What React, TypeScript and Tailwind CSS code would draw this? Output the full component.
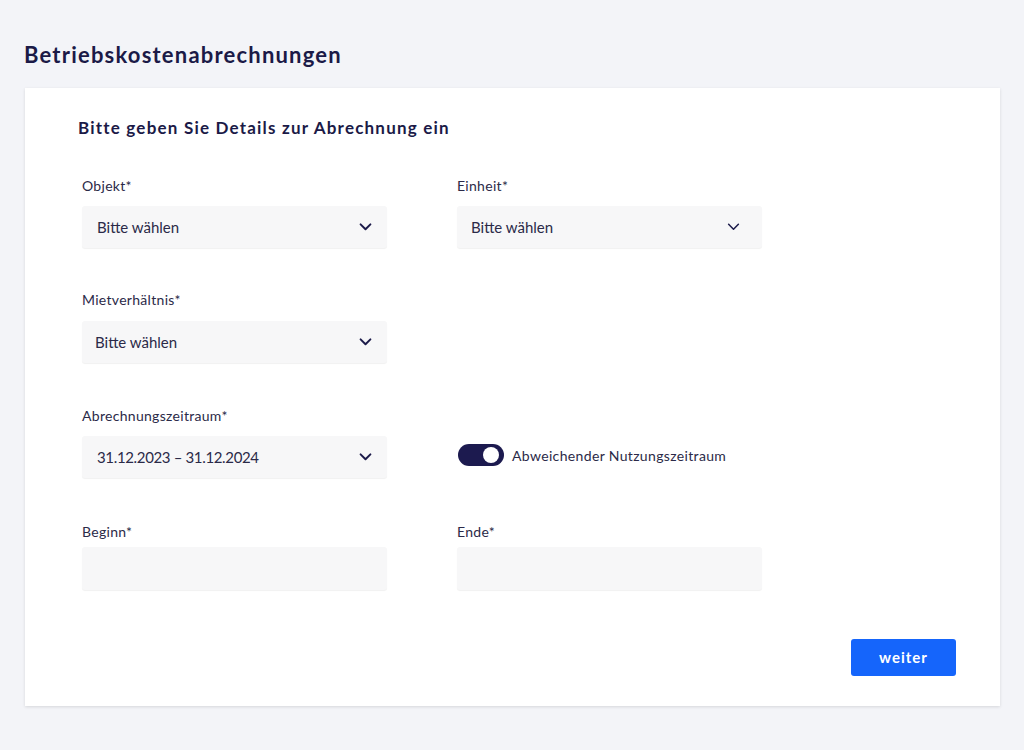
import React from 'react';

function Chevron({ bold = true }: { bold?: boolean }) {
  return (
    <svg width="13" height="8" viewBox="0 0 14 9" fill="none" className="shrink-0">
      <path
        d="M1.5 1.5 L7 7 L12.5 1.5"
        stroke="#1c1b4a"
        strokeWidth={bold ? 2.2 : 1.7}
        strokeLinecap="round"
        strokeLinejoin="round"
      />
    </svg>
  );
}

function Select({
  value,
  textPl = 'pl-[15px]',
  iconPr = 'pr-[15px]',
  bold = true,
  tight = false,
}: {
  value: string;
  textPl?: string;
  iconPr?: string;
  bold?: boolean;
  tight?: boolean;
}) {
  return (
    <div
      className={`flex h-[42px] w-[305px] items-center justify-between rounded-[3px] bg-[#f7f7f8] shadow-[0_1px_1px_rgba(0,0,0,0.06)] ${textPl} ${iconPr}`}
    >
      <span className={`text-[15px] text-[#2b2a48] ${tight ? 'tracking-[-0.35px]' : ''}`}>{value}</span>
      <Chevron bold={bold} />
    </div>
  );
}

function Label({ children, mb = 'mb-[10px]' }: { children: React.ReactNode; mb?: string }) {
  return (
    <div className={`h-[20px] text-[14px] leading-[20px] tracking-[0.3px] text-[#2b2a48] ${mb}`}>{children}</div>
  );
}

export default function App() {
  return (
    <div
      className="min-h-[750px] w-full bg-[#f3f4f8] pt-[41px]"
      style={{ fontFamily: 'Lato, "Open Sans", sans-serif' }}
    >
      {/* Page title */}
      <h1 className="ml-[24px] text-[22px] font-bold leading-[28px] tracking-[1.2px] text-[#1b1a47]">
        Betriebskostenabrechnungen
      </h1>

      {/* Card */}
      <div className="ml-[25px] mt-[19px] w-[975px] bg-white pb-[30px] pl-[53px] pr-[44px] pt-[28px] shadow-[0_1px_3px_rgba(0,0,0,0.12)]">
        <h2 className="text-[17px] font-bold leading-[24px] tracking-[1.2px] text-[#1b1a47]">
          Bitte geben Sie Details zur Abrechnung ein
        </h2>

        <div className="ml-[4px] mt-[36px] grid grid-cols-[305px_305px] gap-x-[70px]">
          {/* Row 1 */}
          <div>
            <Label>Objekt*</Label>
            <Select value="Bitte wählen" />
          </div>
          <div>
            <Label>Einheit*</Label>
            <Select value="Bitte wählen" textPl="pl-[14px]" iconPr="pr-[22px]" bold={false} />
          </div>

          {/* Row 2 */}
          <div className="mt-[42px]">
            <Label mb="mb-[11px]">Mietverhältnis*</Label>
            <Select value="Bitte wählen" textPl="pl-[13px]" />
          </div>
          <div className="mt-[42px]" />

          {/* Row 3 */}
          <div className="mt-[43px]">
            <Label>Abrechnungszeitraum*</Label>
            <Select value="31.12.2023 – 31.12.2024" tight />
          </div>
          <div className="mt-[43px]">
            <div className="mb-[10px] h-[20px]" />
            <div className="flex h-[38px] items-center gap-[8px] pl-[1px]">
              <div className="relative h-[22px] w-[46px] rounded-full bg-[#1c1a4f]">
                <div className="absolute right-[5px] top-[3px] h-[16px] w-[16px] rounded-full bg-white" />
              </div>
              <span className="text-[14px] tracking-[0.35px] text-[#2b2a48]">Abweichender Nutzungszeitraum</span>
            </div>
          </div>

          {/* Row 4 */}
          <div className="mt-[44px]">
            <Label mb="mb-[5px]">Beginn*</Label>
            <div className="h-[43px] w-[305px] rounded-[3px] bg-[#f7f7f8] shadow-[0_1px_1px_rgba(0,0,0,0.06)]" />
          </div>
          <div className="mt-[44px]">
            <Label mb="mb-[5px]">Ende*</Label>
            <div className="h-[43px] w-[305px] rounded-[3px] bg-[#f7f7f8] shadow-[0_1px_1px_rgba(0,0,0,0.06)]" />
          </div>
        </div>

        <div className="mt-[49px] flex justify-end">
          <button className="h-[37px] w-[105px] rounded-[3px] bg-[#1565fb] text-[15px] font-bold tracking-[1px] text-white">
            weiter
          </button>
        </div>
      </div>
    </div>
  );
}
